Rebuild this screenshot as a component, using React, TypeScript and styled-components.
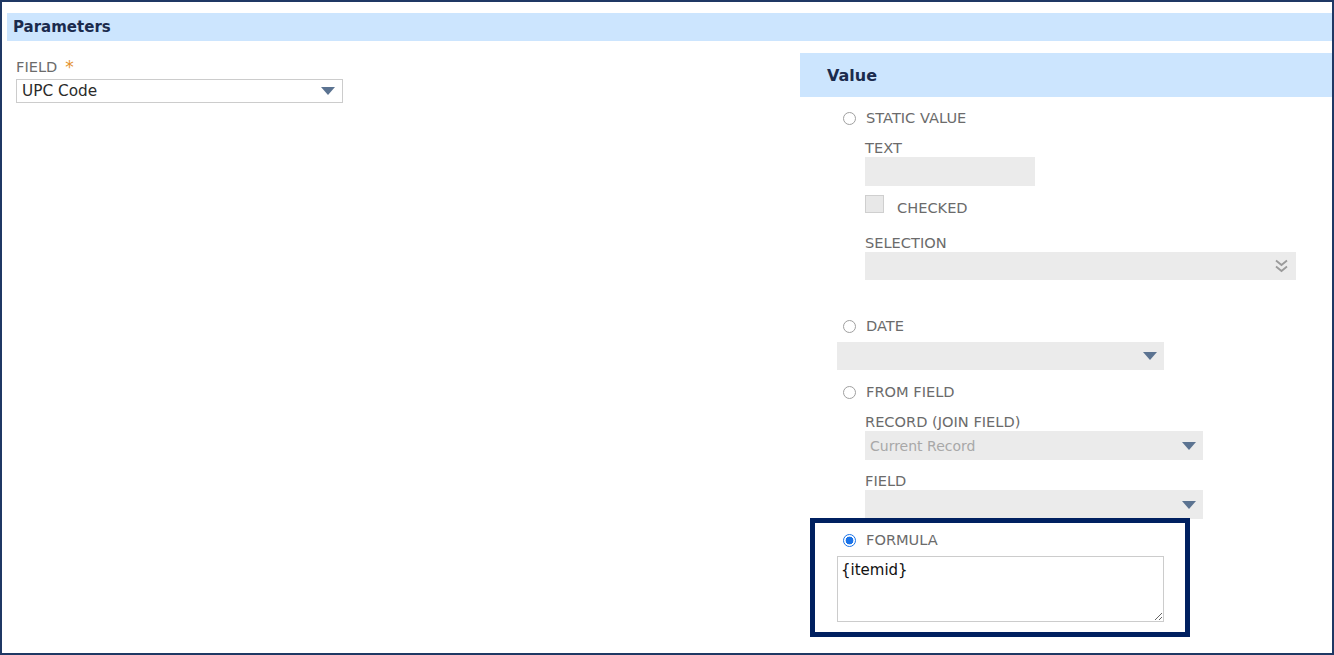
import React from 'react';
import styled, { createGlobalStyle } from 'styled-components';

const GlobalStyle = createGlobalStyle`
  html, body {
    margin: 0;
    padding: 0;
    background: #ffffff;
  }
  body {
    font-family: 'DejaVu Sans', Verdana, sans-serif;
  }
  * {
    box-sizing: border-box;
  }
`;

const Frame = styled.div`
  width: 1334px;
  height: 655px;
  border: 2px solid #1f3864;
  padding: 11px 0 0 5px;
  display: flex;
  flex-direction: column;
  overflow: hidden;
`;

const SectionHeader = styled.div`
  height: 28px;
  line-height: 27px;
  padding: 1px 0 0 6px;
  background: #cce5fe;
  color: #1b2b4d;
  font-size: 15px;
  font-weight: 700;
`;

const Columns = styled.div`
  display: flex;
  flex: 1;
`;

const LeftColumn = styled.div`
  width: 793px;
  padding: 19px 0 0 9px;
`;

const RightColumn = styled.div`
  flex: 1;
  padding-top: 12px;
`;

const ValueHeader = styled.div`
  height: 44px;
  line-height: 43px;
  padding: 1px 0 0 27px;
  background: #cce5fe;
  color: #1b2b4d;
  font-size: 16px;
  font-weight: 700;
`;

const ValueBody = styled.div`
  padding-left: 10px;
  display: flex;
  flex-direction: column;
`;

const Option = styled.div<{ $top: number }>`
  margin-top: ${(p) => p.$top}px;
  padding-left: 27px;
  display: flex;
  flex-direction: column;
`;

const Highlight = styled.div`
  margin-top: -1px;
  width: 380px;
  border: 5px solid #002060;
  padding: 7px 0 10px 22px;
  display: flex;
  flex-direction: column;
`;

const Label = styled.div<{ $top?: number }>`
  margin-top: ${(p) => p.$top ?? 0}px;
  height: 14px;
  line-height: 14px;
  font-size: 14.6px;
  color: #6b6b6b;
  text-transform: uppercase;
  white-space: nowrap;
`;

const Required = styled.span`
  color: #e4922f;
  font-size: 17px;
  margin-left: 8px;
  vertical-align: -1px;
`;

const RadioRow = styled.label`
  display: flex;
  align-items: center;
  height: 20px;
  padding-left: 6px;
  gap: 10px;
`;

const Radio = styled.input.attrs({ type: 'radio' })`
  appearance: none;
  margin: 0;
  width: 13px;
  height: 13px;
  border-radius: 50%;
  border: 1px solid #a0a0a0;
  background: #ffffff;
  &:checked {
    border: 1px solid #1a73e8;
    background: radial-gradient(circle, #1a73e8 0 3.6px, #ffffff 4.2px);
  }
`;

const Sub = styled.div`
  margin-left: 28px;
  display: flex;
  flex-direction: column;
`;

const TextBox = styled.div<{ $top: number; $width: number; $height: number }>`
  margin-top: ${(p) => p.$top}px;
  width: ${(p) => p.$width}px;
  height: ${(p) => p.$height}px;
  background: #ebebeb;
`;

const CheckRow = styled.div`
  margin-top: 9px;
  display: flex;
  align-items: flex-start;
  gap: 13px;
`;

const CheckBox = styled.div`
  width: 19px;
  height: 18px;
  background: #e8e8e8;
  border: 1px solid #cfcfcf;
`;

const CheckLabel = styled(Label)`
  margin-top: 6px;
`;

const SelectBox = styled.div<{ $top: number; $width: number; $height: number; $bordered?: boolean }>`
  margin-top: ${(p) => p.$top}px;
  width: ${(p) => p.$width}px;
  height: ${(p) => p.$height}px;
  background: ${(p) => (p.$bordered ? '#ffffff' : '#ebebeb')};
  border: ${(p) => (p.$bordered ? '1px solid #cccccc' : 'none')};
  display: flex;
  align-items: center;
  justify-content: space-between;
  padding: 0 7px 0 4px;
`;

const SelectText = styled.span<{ $muted?: boolean }>`
  font-size: ${(p) => (p.$muted ? '14px' : '15.3px')};
  color: ${(p) => (p.$muted ? '#a8a8a8' : '#2a2a2a')};
  margin-top: ${(p) => (p.$muted ? '1px' : '0')};
  padding-left: 1px;
`;

const Formula = styled.textarea`
  margin-top: 6px;
  width: 327px;
  height: 66px;
  border: 1px solid #cccccc;
  padding: 4px 3px;
  font-family: 'DejaVu Sans', Verdana, sans-serif;
  font-size: 15px;
  color: #111111;
  resize: both;
  outline: none;
`;

const Caret = () => (
  <svg width="14" height="8" viewBox="0 0 14 8">
    <path d="M0 0 H14 L7 8 Z" fill="#5b7391" />
  </svg>
);

const DoubleChevron = () => (
  <svg width="15" height="14" viewBox="0 0 15 14">
    <path d="M2 1.5 L7.5 6 L13 1.5" fill="none" stroke="#9a9a9a" strokeWidth="1.8" />
    <path d="M2 7.5 L7.5 12 L13 7.5" fill="none" stroke="#9a9a9a" strokeWidth="1.8" />
  </svg>
);

const App = () => {
  return (
    <>
      <GlobalStyle />
      <Frame>
        <SectionHeader>Parameters</SectionHeader>
        <Columns>
          <LeftColumn>
            <Label>
              Field<Required>*</Required>
            </Label>
            <SelectBox $top={5} $width={327} $height={24} $bordered>
              <SelectText>UPC Code</SelectText>
              <Caret />
            </SelectBox>
          </LeftColumn>

          <RightColumn>
            <ValueHeader>Value</ValueHeader>
            <ValueBody>
              <Option $top={11}>
                <RadioRow>
                  <Radio name="value" />
                  <Label>Static Value</Label>
                </RadioRow>
                <Sub>
                  <Label $top={13}>Text</Label>
                  <TextBox $top={2} $width={170} $height={29} />
                  <CheckRow>
                    <CheckBox />
                    <CheckLabel>Checked</CheckLabel>
                  </CheckRow>
                  <Label $top={21}>Selection</Label>
                  <SelectBox $top={2} $width={431} $height={28}>
                    <span />
                    <DoubleChevron />
                  </SelectBox>
                </Sub>
              </Option>

              <Option $top={36}>
                <RadioRow>
                  <Radio name="value" />
                  <Label>Date</Label>
                </RadioRow>
                <SelectBox $top={6} $width={327} $height={28}>
                  <span />
                  <Caret />
                </SelectBox>
              </Option>

              <Option $top={12}>
                <RadioRow>
                  <Radio name="value" />
                  <Label>From Field</Label>
                </RadioRow>
                <Sub>
                  <Label $top={13}>Record (Join Field)</Label>
                  <SelectBox $top={2} $width={338} $height={29}>
                    <SelectText $muted>Current Record</SelectText>
                    <Caret />
                  </SelectBox>
                  <Label $top={14}>Field</Label>
                  <SelectBox $top={2} $width={338} $height={29}>
                    <span />
                    <Caret />
                  </SelectBox>
                </Sub>
              </Option>

              <Highlight>
                <RadioRow>
                  <Radio name="value" defaultChecked />
                  <Label>Formula</Label>
                </RadioRow>
                <Formula defaultValue="{itemid}" spellCheck={false} />
              </Highlight>
            </ValueBody>
          </RightColumn>
        </Columns>
      </Frame>
    </>
  );
};

export default App;
